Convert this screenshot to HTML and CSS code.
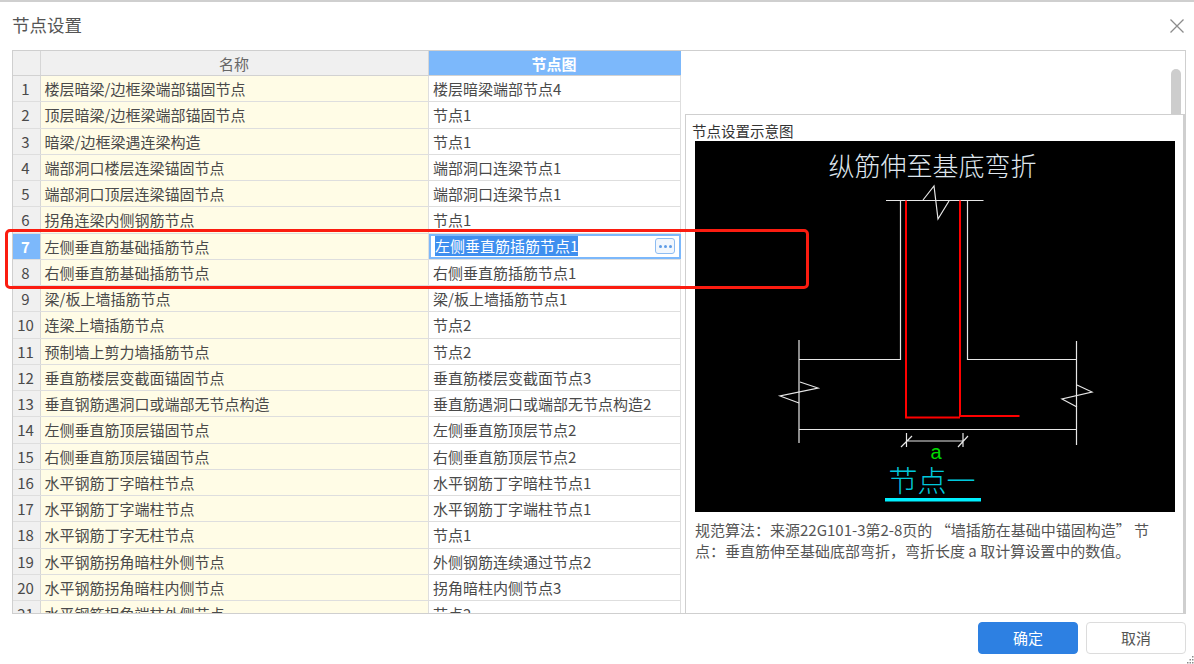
FILE: index.html
```html
<!DOCTYPE html>
<html lang="zh-CN">
<head>
<meta charset="utf-8">
<title>节点设置</title>
<link rel="stylesheet" href="styles.css">
</head>
<body>
<div class="dialog">
  <header class="titlebar">
    <h1 class="title">节点设置</h1>
    <svg class="close" width="16" height="16" viewBox="0 0 16 16"><path d="M1.5 1.5L14.5 14.5M14.5 1.5L1.5 14.5" stroke="#8c8c8c" stroke-width="1.3" fill="none"/></svg>
  </header>
  <main class="content">
    <section class="list">
      <div class="row head"><div class="idx"></div><div class="name">名称</div><div class="node active">节点图</div></div>
      <div class="row"><div class="idx">1</div><div class="name">楼层暗梁/边框梁端部锚固节点</div><div class="node">楼层暗梁端部节点4</div></div>
      <div class="row"><div class="idx">2</div><div class="name">顶层暗梁/边框梁端部锚固节点</div><div class="node">节点1</div></div>
      <div class="row"><div class="idx">3</div><div class="name">暗梁/边框梁遇连梁构造</div><div class="node">节点1</div></div>
      <div class="row"><div class="idx">4</div><div class="name">端部洞口楼层连梁锚固节点</div><div class="node">端部洞口连梁节点1</div></div>
      <div class="row"><div class="idx">5</div><div class="name">端部洞口顶层连梁锚固节点</div><div class="node">端部洞口连梁节点1</div></div>
      <div class="row"><div class="idx">6</div><div class="name">拐角连梁内侧钢筋节点</div><div class="node">节点1</div></div>
      <div class="row"><div class="idx current">7</div><div class="name">左侧垂直筋基础插筋节点</div><div class="node editing"><span class="selected">左侧垂直筋插筋节点1</span><span class="more"><i></i><i></i><i></i></span></div></div>
      <div class="row"><div class="idx">8</div><div class="name">右侧垂直筋基础插筋节点</div><div class="node">右侧垂直筋插筋节点1</div></div>
      <div class="row"><div class="idx">9</div><div class="name">梁/板上墙插筋节点</div><div class="node">梁/板上墙插筋节点1</div></div>
      <div class="row"><div class="idx">10</div><div class="name">连梁上墙插筋节点</div><div class="node">节点2</div></div>
      <div class="row"><div class="idx">11</div><div class="name">预制墙上剪力墙插筋节点</div><div class="node">节点2</div></div>
      <div class="row"><div class="idx">12</div><div class="name">垂直筋楼层变截面锚固节点</div><div class="node">垂直筋楼层变截面节点3</div></div>
      <div class="row"><div class="idx">13</div><div class="name">垂直钢筋遇洞口或端部无节点构造</div><div class="node">垂直筋遇洞口或端部无节点构造2</div></div>
      <div class="row"><div class="idx">14</div><div class="name">左侧垂直筋顶层锚固节点</div><div class="node">左侧垂直筋顶层节点2</div></div>
      <div class="row"><div class="idx">15</div><div class="name">右侧垂直筋顶层锚固节点</div><div class="node">右侧垂直筋顶层节点2</div></div>
      <div class="row"><div class="idx">16</div><div class="name">水平钢筋丁字暗柱节点</div><div class="node">水平钢筋丁字暗柱节点1</div></div>
      <div class="row"><div class="idx">17</div><div class="name">水平钢筋丁字端柱节点</div><div class="node">水平钢筋丁字端柱节点1</div></div>
      <div class="row"><div class="idx">18</div><div class="name">水平钢筋丁字无柱节点</div><div class="node">节点1</div></div>
      <div class="row"><div class="idx">19</div><div class="name">水平钢筋拐角暗柱外侧节点</div><div class="node">外侧钢筋连续通过节点2</div></div>
      <div class="row"><div class="idx">20</div><div class="name">水平钢筋拐角暗柱内侧节点</div><div class="node">拐角暗柱内侧节点3</div></div>
      <div class="row"><div class="idx">21</div><div class="name">水平钢筋拐角端柱外侧节点</div><div class="node">节点2</div></div>
    </section>
    <aside class="side">
      <div class="thumb"></div>
      <section class="preview">
        <div class="preview-title">节点设置示意图</div>
        <svg class="diagram" width="480" height="371" viewBox="695 141 480 371">
          <rect x="695" y="141" width="480" height="371" fill="#000"/>
          <text class="d-title" x="932.5" y="176" text-anchor="middle">纵筋伸至基底弯折</text>
          <g fill="none" stroke="#e6e6e6" stroke-width="1.2">
            <path d="M886 200.5H983.5"/>
            <path d="M923 200L934 186L938 219L949 201"/>
            <path d="M900.5 200.5V359.5H799M967.5 200.5V359.5H1076.5"/>
            <path d="M799 340V443M1076.5 341V445M799 429.5H1076.5"/>
            <path d="M800 382L818 388L780 396L799 403M1077 385L1092 392L1062 399L1077 407"/>
            <path d="M906.5 441H963M906.5 433V447M963 433V447M901 447L912 436M958 447L968 436"/>
          </g>
          <g fill="none" stroke="#f00" stroke-width="2">
            <path d="M906 200.5V417.5H960M960 200.5V417M960 416H1019.5"/>
          </g>
          <text class="d-a" x="936" y="459" text-anchor="middle">a</text>
          <text class="d-node" x="932" y="492" text-anchor="middle">节点一</text>
          <rect x="885" y="498" width="96" height="3.5" fill="#00f0ff"/>
        </svg>
        <p class="desc">规范算法&#xFF1A;来源22G101-3第2-8页的 &#x201C;墙插筋在基础中锚固构造&#x201D; 节点&#xFF1A;垂直筋伸至基础底部弯折&#xFF0C;弯折长度 a 取计算设置中的数值&#x3002;</p>
      </section>
    </aside>
  </main>
  <footer class="actions">
    <button class="btn primary" type="button">确定</button>
    <button class="btn" type="button">取消</button>
  </footer>
  <div class="callout"></div>
  <svg class="grip" width="7" height="9" viewBox="0 0 7 9"><path d="M5 1h1.5v1.5H5zM2.5 4H4v1.5H2.5zM5 4h1.5v1.5H5zM0 7h1.5v1.5H0zM2.5 7H4v1.5H2.5zM5 7h1.5v1.5H5z" fill="#8a8a8a"/></svg>
</div>
</body>
</html>
```
FILE: styles.css
```css
* { box-sizing: border-box; }
html, body { margin: 0; padding: 0; }
body {
  background: #fff;
  font-family: "Noto Sans CJK SC", "Noto Sans", sans-serif;
  color: #4a4a4a;
  overflow: hidden;
}
.dialog {
  position: relative;
  width: 1194px;
  height: 664px;
  border-top: 2px solid #cfcfcf;
  display: flex;
  flex-direction: column;
}
.titlebar {
  height: 48px;
  padding: 0 9px 0 12px;
  display: flex;
  align-items: center;
  justify-content: space-between;
  flex: none;
}
.title { margin: 0 0 2px; font-size: 17.5px; font-weight: 400; color: #555; line-height: 46px; }
.content {
  flex: none;
  height: 564px;
  margin: 0 8px 0 12px;
  border: 1px solid #cfcfcf;
  display: flex;
  overflow: hidden;
}
.list { flex: none; width: 668px; overflow: hidden; }
.row {
  display: flex;
  height: 26.25px;
  font-size: 15px;
  line-height: 25px;
  border-bottom: 1px solid #dedede;
}
.row.head { height: 25px; border-bottom: 1px solid #d2d2d2; }
.idx {
  flex: none;
  width: 28px;
  background: #f0f0f0;
  border-right: 1px solid #d6d6d6;
  text-align: center;
  padding-right: 2px;
}
.idx.current { background: #7cb8fb; color: #fff; font-weight: 700; }
.name {
  flex: none;
  width: 388px;
  padding-left: 3.5px;
  background: #fffce6;
  border-right: 1px solid #dedede;
  white-space: nowrap;
}
.node {
  flex: none;
  width: 252px;
  padding-left: 4px;
  border-right: 1px solid #dedede;
  white-space: nowrap;
}
.head .name { background: #f0f0f0; text-align: center; padding: 0 1px 0 0; color: #666; border-right: 1px solid #d6d6d6; }
.node.active { background: #7cb8fb; color: #fff; font-weight: 700; text-align: center; border-right: 0; padding: 0 2px 0 0; }
.node.editing {
  border: 2px solid #7cb8fb;
  padding-left: 4px;
  display: flex;
  align-items: center;
  justify-content: space-between;
  padding-right: 4px;
  line-height: 20px;
}
.selected { background: #3f8fef; color: #fff; }
.more {
  width: 20px;
  height: 16px;
  border: 1px solid #8dbcf2;
  border-radius: 3px;
  background: #f2f7fd;
  display: flex;
  align-items: center;
  justify-content: center;
  gap: 2px;
}
.more i { width: 3px; height: 3px; border-radius: 50%; background: #5d9be6; }
.side {
  position: relative;
  flex: 1;
  min-width: 0;
  padding: 63px 0 0 4px;
  display: flex;
}
.thumb {
  position: absolute;
  top: 18px;
  right: 4px;
  width: 10px;
  height: 45px;
  border-radius: 5px 5px 0 0;
  background: #cdcdcd;
}
.preview {
  flex: 1;
  border: 1px solid #cfcfcf;
  border-right: 2px solid #cfcfcf;
  border-bottom: 0;
  padding: 6px 8px 0 9px;
}
.preview-title { font-size: 14.5px; line-height: 20px; color: #333; margin-left: -3px; }
.diagram { display: block; }
.d-title { font-size: 26px; fill: #dfe6ee; font-weight: 300; }
.d-a { font-size: 20px; fill: #00d800; font-family: "Liberation Sans", sans-serif; }
.d-node { font-size: 29px; fill: #00c8dc; font-weight: 300; }
.desc { margin: 7px 0 0; font-size: 15px; line-height: 21px; color: #555; width: 462px; }
.actions {
  flex: 1;
  display: flex;
  justify-content: flex-end;
  gap: 8px;
  padding: 8px 8px 0 0;
}
.btn {
  width: 100px;
  height: 32px;
  border: 1px solid #dcdcdc;
  border-radius: 4px;
  background: #fff;
  color: #555;
  font: 15px "Noto Sans CJK SC", sans-serif;
  padding: 0 0 2px;
}
.btn.primary { background: #2d80e2; border-color: #2d80e2; color: #fff; }
.callout {
  position: absolute;
  left: 5px;
  top: 227px;
  width: 804px;
  height: 60px;
  border: 3px solid #fb1c10;
  border-radius: 5px;
  pointer-events: none;
}
.grip { position: absolute; right: 0; bottom: 0; }
```
